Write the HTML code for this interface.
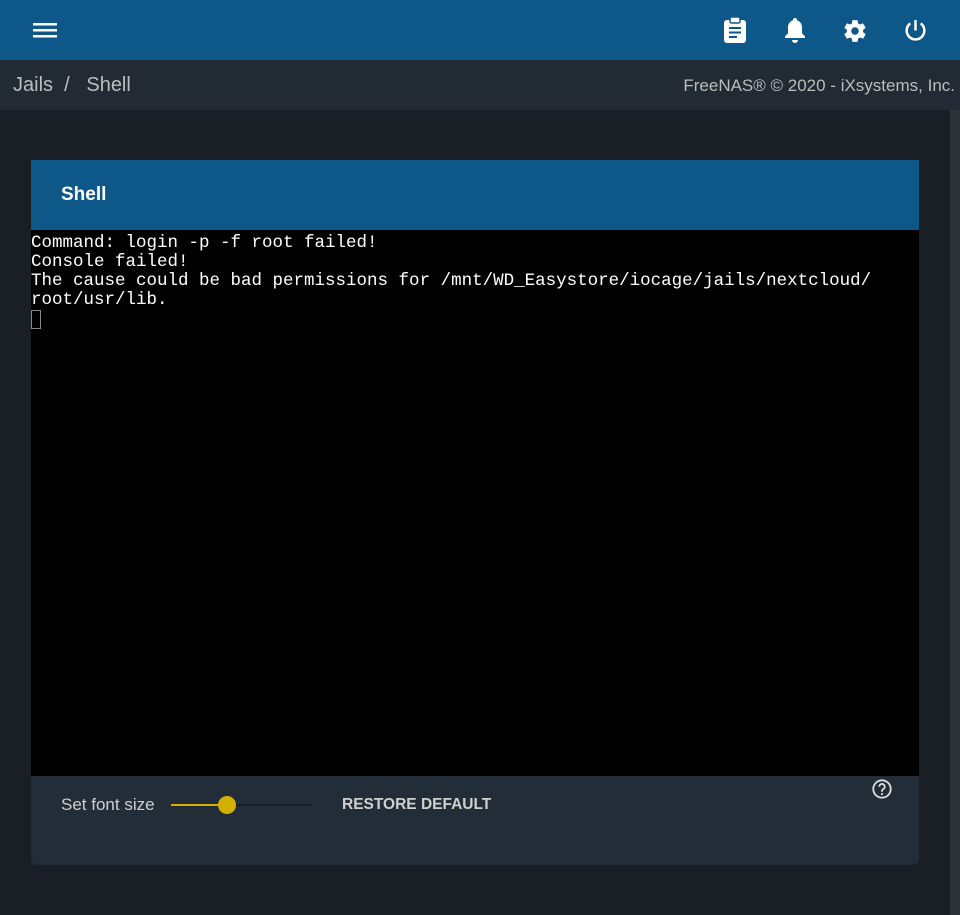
<!DOCTYPE html>
<html><head><style>
*{margin:0;padding:0;box-sizing:border-box}
body{width:960px;height:915px;background:#1a1f26;font-family:"Liberation Sans",sans-serif;position:relative;overflow:hidden}
.top{position:absolute;left:0;top:0;width:960px;height:60px;background:#0e5789}
.crumb{position:absolute;left:0;top:60px;width:960px;height:50px;background:#222a33;color:#bdbdbd;font-size:20px}
.sb{position:absolute;left:950px;top:110px;width:10px;height:805px;background:#2e3338}
.card{position:absolute;left:31px;top:160px;width:888px;height:705px;border-radius:0 0 6px 6px;overflow:hidden;background:#232d37}
.hdr{height:70px;background:#0e5789;color:#fff;font-weight:bold;font-size:19px;padding:24px 0 0 30px}
.term{height:546px;background:#000;color:#fff;font-family:"Liberation Mono",monospace;font-size:17.5px;line-height:19px;padding-top:4px;white-space:pre}
.cur{display:inline-block;width:10px;height:19px;border:1px solid #888;vertical-align:top}
svg{position:absolute}
</style></head><body>
<div class="top">
<svg style="left:33px;top:21px" width="24" height="18"><rect x="0" y="2" width="24" height="2.5" fill="#fff"/><rect x="0" y="8" width="24" height="2.5" fill="#fff"/><rect x="0" y="14" width="24" height="2.5" fill="#fff"/></svg>
<svg style="left:723px;top:17px" width="24" height="26" viewBox="0 0 24 26"><rect x="1" y="3" width="22" height="23" rx="3" fill="#fff"/><rect x="7" y="0" width="10" height="6" rx="1.5" fill="#fff" stroke="#0e5789" stroke-width="1.5"/><rect x="6" y="10" width="12" height="2" fill="#0e5789"/><rect x="6" y="14.5" width="12" height="2" fill="#0e5789"/><rect x="6" y="19" width="8" height="2" fill="#0e5789"/></svg>
<svg style="left:783px;top:17px" width="24" height="27" viewBox="0 0 24 27"><path d="M12 1c1.2 0 2 .8 2 1.8v.6c3.2.9 5 3.6 5 7v6l3 3v1.6H2V19.4l3-3v-6c0-3.4 1.8-6.1 5-7v-.6C10 1.8 10.8 1 12 1z" fill="#fff"/><path d="M9 23h6a3 3 0 0 1-6 0z" fill="#fff"/></svg>
<svg style="left:842px;top:18px" width="26" height="26" viewBox="0 0 24 24"><path fill="#fff" d="M19.4 13c.04-.33.06-.66.06-1s-.02-.67-.06-1l2.1-1.65c.2-.15.24-.42.12-.64l-2-3.460c-.12-.22-.39-.3-.61-.22l-2.49 1c-.52-.4-1.080-.73-1.69-.98l-.38-2.65A.49.49 0 0 0 14 2h-4c-.25 0-.46.18-.49.42l-.38 2.65c-.61.25-1.17.59-1.69.98l-2.49-1c-.23-.09-.49 0-.61.22l-2 3.46c-.13.22-.07.49.12.64L4.57 11c-.04.33-.07.67-.07 1s.03.67.07 1l-2.11 1.65c-.19.15-.24.42-.12.64l2 3.46c.12.22.39.3.61.22l2.49-1c.52.4 1.08.73 1.69.98l.38 2.65c.03.24.24.42.49.42h4c.25 0 .46-.18.49-.42l.38-2.65c.61-.25 1.17-.59 1.69-.98l2.49 1c.23.09.49 0 .61-.22l2-3.46c.12-.22.07-.49-.12-.64L19.4 13zM12 15.5A3.5 3.5 0 1 1 12 8.5a3.5 3.5 0 0 1 0 7z"/></svg>
<svg style="left:903px;top:18px" width="25" height="25" viewBox="0 0 24 24"><path d="M12 2v10" stroke="#fff" stroke-width="2.4" fill="none"/><path d="M7 5.2A8.5 8.5 0 1 0 17 5.2" stroke="#fff" stroke-width="2.4" fill="none"/></svg>
</div>
<div class="crumb"><span style="position:absolute;left:13px;top:14px">Jails&nbsp;&nbsp;/&nbsp;&nbsp;&nbsp;Shell</span><span style="position:absolute;right:5px;top:16px;font-size:17px">FreeNAS® © 2020 - iXsystems, Inc.</span></div>
<div class="sb"></div>
<div class="card">
<div class="hdr">Shell</div>
<div class="term">Command: login -p -f root failed!
Console failed!
The cause could be bad permissions for /mnt/WD_Easystore/iocage/jails/nextcloud/
root/usr/lib.
<span class="cur"></span></div>
<div style="position:relative;height:89px;color:#d0d0d0">
<span style="position:absolute;left:30px;top:19px;font-size:17px">Set font size</span>
<div style="position:absolute;left:140px;top:28px;width:140px;height:2px;background:#1a1f26"></div>
<div style="position:absolute;left:140px;top:28px;width:56px;height:2px;background:#d4b000"></div>
<div style="position:absolute;left:187px;top:20px;width:18px;height:18px;border-radius:50%;background:#d4b000"></div>
<span style="position:absolute;left:311px;top:20px;font-size:15.5px;font-weight:bold">RESTORE DEFAULT</span>
<svg style="left:840px;top:2px" width="22" height="22" viewBox="0 0 24 24"><circle cx="12" cy="12" r="9.5" stroke="#ddd" stroke-width="2" fill="none"/><path d="M9 9.5a3 3 0 1 1 4.3 2.7c-.9.5-1.3 1-1.3 2v.8" stroke="#ddd" stroke-width="2" fill="none"/><circle cx="12" cy="17.5" r="1.2" fill="#ddd"/></svg>
</div>
</div>
</body></html>
